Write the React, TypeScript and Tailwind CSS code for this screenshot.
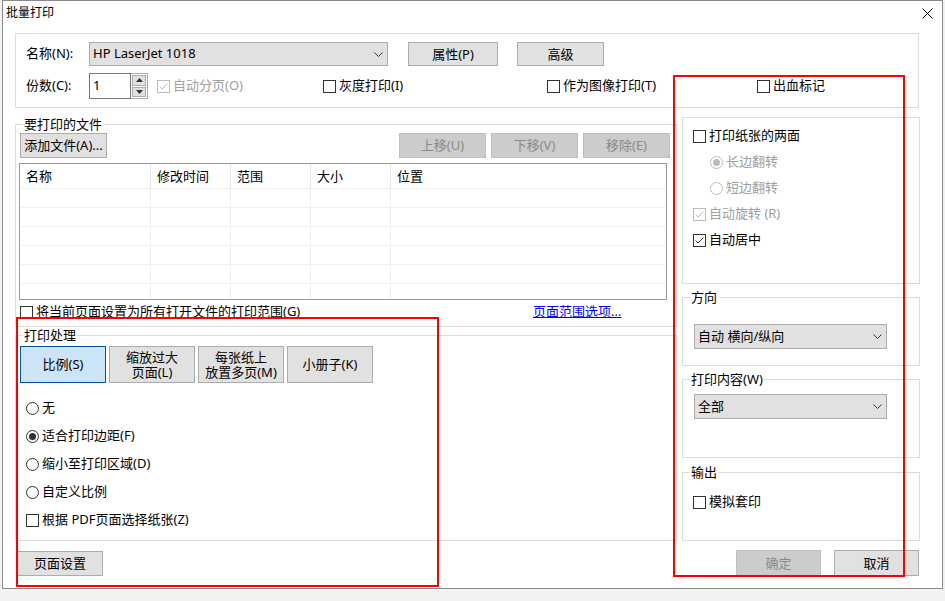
import React from "react";

const font = "font-['Noto_Sans','Noto_Sans_CJK_SC',sans-serif]";

function Check({ checked = false, disabled = false }: { checked?: boolean; disabled?: boolean }) {
  return (
    <span
      className={`flex h-[13px] w-[13px] shrink-0 items-center justify-center border bg-white ${
        disabled ? "border-[#bcbcbc]" : "border-[#333333]"
      }`}
    >
      {checked && (
        <svg width="11" height="11" viewBox="0 0 11 11">
          <path d="M1.5 5.5 L4 8 L9.5 2.5" fill="none" stroke={disabled ? "#bcbcbc" : "#333333"} strokeWidth="1" />
        </svg>
      )}
    </span>
  );
}

function Radio({ checked = false, disabled = false }: { checked?: boolean; disabled?: boolean }) {
  return (
    <span
      className={`flex h-[13px] w-[13px] shrink-0 items-center justify-center rounded-full border bg-white ${
        disabled ? "border-[#bcbcbc]" : "border-[#333333]"
      }`}
    >
      {checked && <span className={`h-[7px] w-[7px] rounded-full ${disabled ? "bg-[#bcbcbc]" : "bg-[#333333]"}`} />}
    </span>
  );
}

function Option({
  label,
  radio = false,
  checked = false,
  disabled = false,
  className = "",
}: {
  label: string;
  radio?: boolean;
  checked?: boolean;
  disabled?: boolean;
  className?: string;
}) {
  return (
    <div className={`flex items-center gap-[3px] ${className}`}>
      {radio ? <Radio checked={checked} disabled={disabled} /> : <Check checked={checked} disabled={disabled} />}
      <span className={`whitespace-nowrap ${disabled ? "text-[#a0a0a0]" : "text-black"}`}>{label}</span>
    </div>
  );
}

function Btn({
  children,
  className = "",
  disabled = false,
  selected = false,
}: {
  children: React.ReactNode;
  className?: string;
  disabled?: boolean;
  selected?: boolean;
}) {
  const look = disabled
    ? "border-[#bfbfbf] bg-[#cccccc] text-[#8a8a8a]"
    : selected
    ? "border-[#005499] bg-[#cce4f7] text-black"
    : "border-[#adadad] bg-[#e1e1e1] text-black";
  return (
    <div className={`flex shrink-0 flex-col items-center justify-center border text-center leading-[15px] ${look} ${className}`}>
      {children}
    </div>
  );
}

function Chevron() {
  return (
    <svg width="9" height="5" viewBox="0 0 9 5">
      <path d="M0.5 0.5 L4.5 4.5 L8.5 0.5" fill="none" stroke="#333333" strokeWidth="1" />
    </svg>
  );
}

function Combo({ value, className = "" }: { value: string; className?: string }) {
  return (
    <div className={`flex items-center justify-between border border-[#adadad] bg-[#e1e1e1] pl-[3px] pr-[4px] ${className}`}>
      <span className="whitespace-nowrap">{value}</span>
      <Chevron />
    </div>
  );
}

function Group({ label, className = "", children }: { label?: string; className?: string; children?: React.ReactNode }) {
  return (
    <div className={`relative border border-[#dcdcdc] ${className}`}>
      {label && <span className="absolute left-[7px] top-[-9px] bg-white px-[1px] leading-[16px]">{label}</span>}
      {children}
    </div>
  );
}

const colClasses = ["w-[131px]", "w-[80px]", "w-[80px]", "w-[80px]", "flex-1"];
const headers = ["名称", "修改时间", "范围", "大小", "位置"];

function FileList() {
  return (
    <div className="-ml-px h-[137px] w-[648px] overflow-hidden border border-[#999999] bg-white">
      <div className="flex h-[25px] border-b border-[#f0f0f0]">
        {headers.map((h, i) => (
          <div
            key={h}
            className={`h-[24px] pl-[6px] leading-[24px] ${colClasses[i]} ${i < 4 ? "border-r border-[#e5e5e5]" : ""}`}
          >
            {h}
          </div>
        ))}
      </div>
      {[0, 1, 2, 3, 4, 5].map((r) => (
        <div key={r} className="flex h-[19px] border-b border-[#f0f0f0]">
          {colClasses.map((c, i) => (
            <div key={i} className={`h-full ${c} ${i < 4 ? "border-r border-[#f0f0f0]" : ""}`} />
          ))}
        </div>
      ))}
    </div>
  );
}

function Spinner() {
  return (
    <div className="flex h-[26px] w-[59px] shrink-0">
      <div className="flex-1 border border-[#7a7a7a] bg-white pl-[3px] leading-[22px]">1</div>
      <div className="flex w-[17px] flex-col gap-px border border-l-0 border-[#adadad] bg-white p-px">
        <div className="flex flex-1 items-center justify-center border border-[#adadad] bg-[#e1e1e1]">
          <svg width="7" height="4" viewBox="0 0 7 4">
            <path d="M0 4 L3.5 0 L7 4 Z" fill="#333333" />
          </svg>
        </div>
        <div className="flex flex-1 items-center justify-center border border-[#adadad] bg-[#e1e1e1]">
          <svg width="7" height="4" viewBox="0 0 7 4">
            <path d="M0 0 L3.5 4 L7 0 Z" fill="#333333" />
          </svg>
        </div>
      </div>
    </div>
  );
}

export default function App() {
  return (
    <div className={`relative h-[601px] w-[945px] overflow-hidden bg-[#f2f2f2] text-[13px] text-black ${font}`}>
      <div className="ml-[2px] flex h-[589px] w-[941px] flex-col border border-[#8a8a8a] bg-white">
        {/* title bar */}
        <div className="flex h-[24px] items-center justify-between pl-[3px] pr-[9px]">
          <span className="text-[12px]">批量打印</span>
          <svg width="11" height="11" viewBox="0 0 11 11">
            <path d="M0.5 0.5 L10.5 10.5 M10.5 0.5 L0.5 10.5" stroke="#000000" strokeWidth="1" />
          </svg>
        </div>

        <div className="flex flex-col pl-[12px]">
          {/* printer group */}
          <Group className="mt-[8px] h-[75px] w-[904px] pl-[10px] pt-[8px]">
            <div className="flex h-[24px] items-center">
              <span className="w-[63px]">名称(N):</span>
              <Combo value="HP LaserJet 1018" className="h-[24px] w-[299px]" />
              <Btn className="ml-[20px] h-[24px] w-[90px]">属性(P)</Btn>
              <Btn className="ml-[19px] h-[24px] w-[87px]">高级</Btn>
            </div>
            <div className="mt-[7px] flex h-[26px] items-center">
              <span className="w-[63px]">份数(C):</span>
              <Spinner />
              <Option label="自动分页(O)" checked disabled className="ml-[9px] w-[166px]" />
              <Option label="灰度打印(I)" className="w-[224px]" />
              <Option label="作为图像打印(T)" className="w-[210px]" />
              <Option label="出血标记" />
            </div>
          </Group>

          <div className="flex">
            {/* left column */}
            <div className="mt-[16px] flex w-[662px] flex-col">
              <Group label="要打印的文件" className="h-[203px] pl-[4px] pr-[6px] pt-[8px]">
                <div className="flex h-[25px]">
                  <Btn className="h-[25px] w-[87px]">添加文件(A)...</Btn>
                  <div className="ml-auto flex gap-[5px]">
                    <Btn disabled className="h-[25px] w-[87px]">上移(U)</Btn>
                    <Btn disabled className="h-[25px] w-[87px]">下移(V)</Btn>
                    <Btn disabled className="h-[25px] w-[87px]">移除(E)</Btn>
                  </div>
                </div>
                <div className="mt-[5px]">
                  <FileList />
                </div>
                <div className="flex h-[24px] items-center">
                  <Option label="将当前页面设置为所有打开文件的打印范围(G)" className="w-[513px]" />
                  <span className="text-[#0000ff] underline">页面范围选项...</span>
                </div>
              </Group>

              <Group label="打印处理" className="mt-[8px] h-[206px] pl-[4px] pt-[10px]">
                <div className="flex gap-[3px]">
                  <Btn selected className="h-[37px] w-[86px]">比例(S)</Btn>
                  <Btn className="h-[37px] w-[86px]">
                    <span>缩放过大</span>
                    <span>页面(L)</span>
                  </Btn>
                  <Btn className="h-[37px] w-[86px]">
                    <span>每张纸上</span>
                    <span>放置多页(M)</span>
                  </Btn>
                  <Btn className="h-[37px] w-[86px]">小册子(K)</Btn>
                </div>
                <div className="mt-[11px] flex flex-col pl-[6px]">
                  <Option radio label="无" className="h-[28px]" />
                  <Option radio checked label="适合打印边距(F)" className="h-[28px]" />
                  <Option radio label="缩小至打印区域(D)" className="h-[28px]" />
                  <Option radio label="自定义比例" className="h-[28px]" />
                  <Option label="根据 PDF页面选择纸张(Z)" className="h-[28px]" />
                </div>
              </Group>

              <Btn className="ml-[2px] mt-[10px] h-[25px] w-[86px]">页面设置</Btn>
            </div>

            {/* right column */}
            <div className="ml-[5px] mt-[9px] flex w-[238px] flex-col">
              <Group className="h-[167px] pl-[10px] pt-[5px]">
                <Option label="打印纸张的两面" className="h-[26px]" />
                <Option radio checked disabled label="长边翻转" className="ml-[17px] h-[26px]" />
                <Option radio disabled label="短边翻转" className="ml-[17px] h-[26px]" />
                <Option checked disabled label="自动旋转 (R)" className="h-[26px]" />
                <Option checked label="自动居中" className="h-[26px]" />
              </Group>

              <Group label="方向" className="mt-[13px] h-[69px] pl-[11px] pt-[26px]">
                <Combo value="自动 横向/纵向" className="h-[25px] w-[193px]" />
              </Group>

              <Group label="打印内容(W)" className="mt-[13px] h-[79px] pl-[11px] pt-[14px]">
                <Combo value="全部" className="h-[25px] w-[193px]" />
              </Group>

              <Group label="输出" className="mt-[14px] h-[69px] pl-[10px] pt-[19px]">
                <Option label="模拟套印" className="h-[20px]" />
              </Group>

              <div className="mt-[9px] flex justify-end gap-[13px] pr-[1px]">
                <Btn disabled className="h-[26px] w-[85px]">确定</Btn>
                <Btn className="h-[26px] w-[85px]">取消</Btn>
              </div>
            </div>
          </div>
        </div>
      </div>

      {/* red highlight boxes */}
      <div className="absolute left-[16px] top-[317px] h-[270px] w-[423px] border-2 border-[#ff0000]" />
      <div className="absolute left-[673px] top-[75px] h-[502px] w-[232px] border-2 border-[#ff0000]" />
    </div>
  );
}
